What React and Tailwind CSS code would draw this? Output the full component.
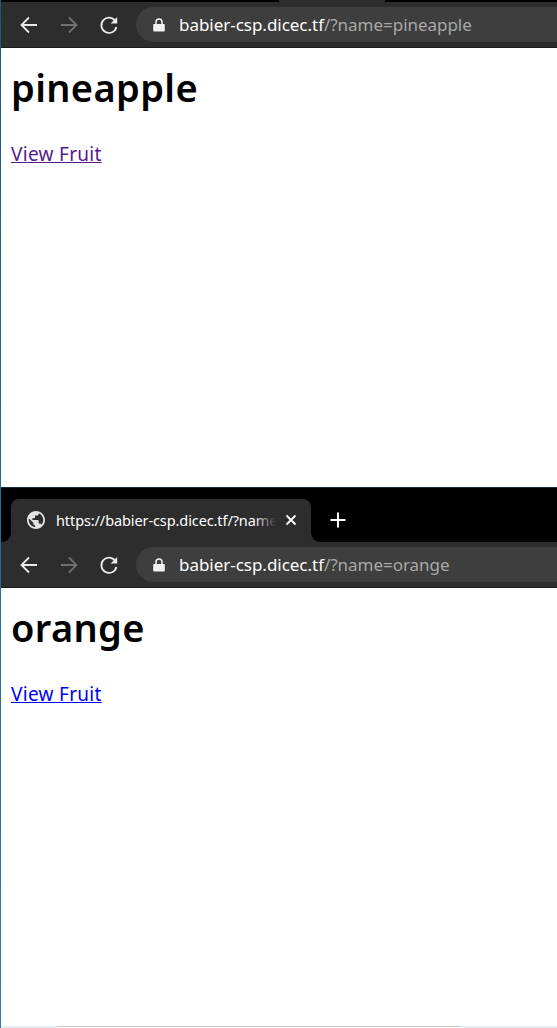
const font = { fontFamily: '"Noto Sans", "Open Sans", sans-serif' };

function NavIcons() {
  return (
    <>
      <svg width="20" height="20" viewBox="0 0 20 20" className="ml-[18px] shrink-0" fill="none" stroke="#e8eaed" strokeWidth="1.800">
        <path d="M18 10H3M10 2.500 2.500 10l7.500 7.500" />
      </svg>
      <svg width="20" height="20" viewBox="0 0 20 20" className="ml-[20px] shrink-0" fill="none" stroke="#6f7072" strokeWidth="1.800">
        <path d="M2 10h15M10 2.500 17.500 10 10 17.500" />
      </svg>
      <svg width="20" height="20" viewBox="0 0 20 20" className="ml-[20px] shrink-0" fill="none">
        <path d="M16.400 6.200A7.600 7.600 0 1 0 17.400 12" stroke="#e8eaed" strokeWidth="1.800" />
        <path d="M18.200 2v6.600h-6.600z" fill="#e8eaed" />
      </svg>
    </>
  );
}

function Toolbar({ query }) {
  return (
    <div className="flex items-center bg-[#2d2d2d] shrink-0 h-[46px] border-b border-[#1b1b1b]">
      <NavIcons />
      <div className="ml-[17px] flex items-center h-[35px] flex-1 rounded-l-full bg-[#3e3e3e] min-w-0">
        <svg width="12" height="14" viewBox="0 0 12 14" className="ml-[17px] shrink-0" fill="#f1f1f1">
          <path d="M1 6h10a.8.8 0 0 1 .8.8v5.800a1 1 0 0 1-1 1H1.200a1 1 0 0 1-1-1V6.800A.8.8 0 0 1 1 6z" />
          <path d="M3 6V4a3 3 0 0 1 6 0v2" fill="none" stroke="#f1f1f1" strokeWidth="1.500" />
        </svg>
        <div className="ml-[14px] text-[17px] leading-[24px] whitespace-nowrap tracking-[-0.03px]">
          <span className="text-white">babier-csp.dicec.tf</span>
          <span className="text-[#a8a8a8]">/?name={query}</span>
        </div>
      </div>
    </div>
  );
}

function Page({ title, visited }) {
  return (
    <div className="flex-1 bg-white pl-[10px] min-h-0">
      <h1 className="text-[38px] leading-[50px] font-semibold text-black mt-[14px] tracking-[0.35px]">{title}</h1>
      <a href="#" className={`inline-block mt-[29px] text-[19px] leading-[26px] underline tracking-[0.3px] ${visited ? "text-[#551a8b]" : "text-[#0000ee]"}`}>
        View Fruit
      </a>
    </div>
  );
}

export default function App() {
  return (
    <div style={font} className="w-[557px] h-[1028px] overflow-hidden bg-gradient-to-b from-[#175a7c] to-[#2a82a8] pl-px">
      <div className="h-full bg-white flex flex-col">
        <div className="h-[488px] flex flex-col shrink-0 border-b border-[#1d2b33]">
          <div className="h-[2px] bg-black shrink-0">
            <div className="ml-[278px] w-[106px] h-[2px] bg-[#2d2d2d]" />
          </div>
          <Toolbar query="pineapple" />
          <Page title="pineapple" visited />
        </div>
        <div className="flex-1 flex flex-col min-h-0">
          <div className="h-[54px] bg-black shrink-0 flex items-end">
            <div className="relative ml-[10px] w-[300px] h-[43px] bg-[#2d2d2d] rounded-t-[8px] flex items-center">
              <div className="absolute -left-[10px] bottom-0 w-[10px] h-[10px] bg-[#2d2d2d]">
                <div className="w-full h-full bg-black rounded-br-[9px]" />
              </div>
              <div className="absolute -right-[10px] bottom-0 w-[10px] h-[10px] bg-[#2d2d2d]">
                <div className="w-full h-full bg-black rounded-bl-[9px]" />
              </div>
              <svg width="18" height="18" viewBox="2 2 20 20" className="ml-[16px] -mt-[2px] shrink-0" fill="#e3e3e3">
                <path d="M12 2C6.480 2 2 6.480 2 12s4.480 10 10 10 10-4.480 10-10S17.520 2 12 2zm-1 17.930c-3.950-.49-7-3.850-7-7.930 0-.62.08-1.210.21-1.790L9 15v1c0 1.100.9 2 2 2v1.930zm6.900-2.540c-.26-.81-1-1.390-1.900-1.390h-1v-3c0-.55-.45-1-1-1H8v-2h2c.55 0 1-.45 1-1V7h2c1.100 0 2-.9 2-2v-.41c2.930 1.190 5 4.060 5 7.410 0 2.080-.8 3.970-2.100 5.390z" />
              </svg>
              <div className="relative ml-[11px] -mt-[2px] w-[220px] overflow-hidden whitespace-nowrap text-[14.500px] leading-[20px] text-white tracking-[-0.1px]">
                https://babier-csp.dicec.tf/?name=orange
                <div className="absolute right-0 top-0 bottom-0 w-[22px] bg-gradient-to-r from-transparent to-[#2d2d2d]" />
              </div>
              <svg width="12" height="12" viewBox="0 0 12 12" className="ml-[9px] -mt-[2px] shrink-0" stroke="#fff" strokeWidth="1.800">
                <path d="M1.500 1.500l9 9M10.500 1.500l-9 9" />
              </svg>
            </div>
            <svg width="16" height="16" viewBox="0 0 16 16" className="ml-[19px] mb-[14px] shrink-0" stroke="#fff" strokeWidth="2">
              <path d="M8 .5v15M.5 8h15" />
            </svg>
          </div>
          <Toolbar query="orange" />
          <div className="flex-1 flex flex-col min-h-0">
            <Page title="orange" />
            <div className="h-[2px] shrink-0 bg-[#e4eef4]">
              <div className="ml-[56px] w-[403px] h-[2px] bg-white border-t border-[#c8c8c8]" />
            </div>
          </div>
        </div>
      </div>
    </div>
  );
}
